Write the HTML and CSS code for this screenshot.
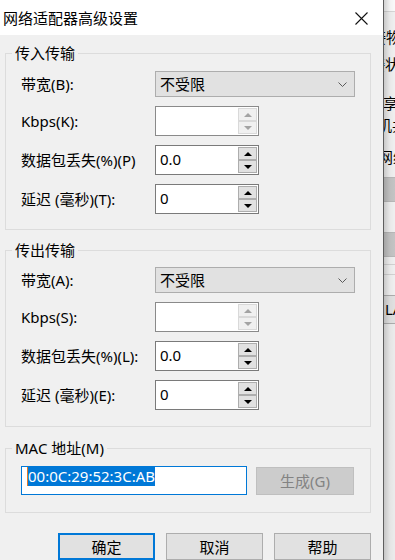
FILE: index.html
```html
<!DOCTYPE html>
<html lang="zh-CN">
<head>
<meta charset="utf-8">
<title>网络适配器高级设置</title>
<link rel="stylesheet" href="styles.css">
</head>
<body>
<div class="screen">
  <div class="dialog">
    <div class="titlebar">
      <span class="title">网络适配器高级设置</span>
      <svg class="close" width="13" height="13" viewBox="0 0 13 13"><path d="M0.5 0.5 L12.5 12.5 M12.5 0.5 L0.5 12.5" stroke="#111" stroke-width="1.1" fill="none"/></svg>
    </div>
    <div class="content">
      <fieldset class="group g-in">
        <legend>传入传输</legend>
        <div class="row">
          <span class="label">带宽(B):</span>
          <div class="combo"><span>不受限</span><svg class="chev" width="9" height="5" viewBox="0 0 9 5"><path d="M0.5 0.5 L4.5 4.5 L8.5 0.5" stroke="#5a5a5a" stroke-width="1" fill="none"/></svg></div>
        </div>
        <div class="row">
          <span class="label">Kbps(K):</span>
          <div class="spin disabled"><span class="val"></span><div class="btns"><span class="sb"><i class="up"></i></span><span class="sb"><i class="down"></i></span></div></div>
        </div>
        <div class="row">
          <span class="label">数据包丢失(%)(P)</span>
          <div class="spin"><span class="val">0.0</span><div class="btns"><span class="sb"><i class="up"></i></span><span class="sb"><i class="down"></i></span></div></div>
        </div>
        <div class="row">
          <span class="label">延迟 (毫秒)(T):</span>
          <div class="spin"><span class="val">0</span><div class="btns"><span class="sb"><i class="up"></i></span><span class="sb"><i class="down"></i></span></div></div>
        </div>
      </fieldset>

      <fieldset class="group g-out">
        <legend>传出传输</legend>
        <div class="row">
          <span class="label">带宽(A):</span>
          <div class="combo"><span>不受限</span><svg class="chev" width="9" height="5" viewBox="0 0 9 5"><path d="M0.5 0.5 L4.5 4.5 L8.5 0.5" stroke="#5a5a5a" stroke-width="1" fill="none"/></svg></div>
        </div>
        <div class="row">
          <span class="label">Kbps(S):</span>
          <div class="spin disabled"><span class="val"></span><div class="btns"><span class="sb"><i class="up"></i></span><span class="sb"><i class="down"></i></span></div></div>
        </div>
        <div class="row">
          <span class="label">数据包丢失(%)(L):</span>
          <div class="spin"><span class="val">0.0</span><div class="btns"><span class="sb"><i class="up"></i></span><span class="sb"><i class="down"></i></span></div></div>
        </div>
        <div class="row">
          <span class="label">延迟 (毫秒)(E):</span>
          <div class="spin"><span class="val">0</span><div class="btns"><span class="sb"><i class="up"></i></span><span class="sb"><i class="down"></i></span></div></div>
        </div>
      </fieldset>

      <fieldset class="group g-mac">
        <legend>MAC 地址(M)</legend>
        <div class="mac-row">
          <div class="mac-input"><span class="sel">00:0C:29:52:3C:AB</span></div>
          <div class="gen-btn">生成(G)</div>
        </div>
      </fieldset>

      <div class="actions">
        <div class="btn default">确定</div>
        <div class="btn">取消</div>
        <div class="btn">帮助</div>
      </div>
    </div>
  </div>

  <div class="behind">
    <div class="b-top"></div>
    <div class="b-line r1"><span class="off1">接物理网络</span></div>
    <div class="b-line r2"><span class="off2">连接状态</span></div>
    <div class="b-line r3"><span class="off3">共享主机</span></div>
    <div class="b-line r4"><span class="off4">主机共享</span></div>
    <div class="b-line r5"><span class="off5">网络</span></div>
    <div class="b-combo c1"></div>
    <div class="b-combo c2"></div>
    <div class="b-sep s1"></div>
    <div class="b-sep s2"></div>
    <div class="b-btn"><span>LAN 区段(S)...</span></div>
    <div class="b-rest"></div>
  </div>
</div>
</body>
</html>
```

FILE: styles.css
```css
* { box-sizing: border-box; }

html, body {
  margin: 0;
  padding: 0;
}

body {
  font-family: "Noto Sans", "Noto Sans CJK SC", sans-serif;
  font-size: 15px;
  color: #000;
  background: #f0f0f0;
}

.screen {
  display: flex;
  width: 395px;
  height: 560px;
  overflow: hidden;
}

.dialog {
  width: 384px;
  flex: none;
  background: #f0f0f0;
  border-right: 1px solid #5e5e5e;
  display: flex;
  flex-direction: column;
}

.titlebar {
  height: 36px;
  background: #fff;
  display: flex;
  align-items: center;
  justify-content: space-between;
  padding: 0 15px 0 3px;
}

.title {
  font-size: 15px;
  line-height: 20px;
  color: #000;
}

.close { display: block; margin-top: 1px; }

.content {
  padding: 0 12px 0 5px;
}

.group {
  margin: 0;
  border: 1px solid #dcdcdc;
  padding: 8px 0 15px 15px;
  min-width: 0;
  display: flex;
  flex-direction: column;
  gap: 9px;
}

.group legend {
  padding: 0 3px;
  margin-left: -9px;
  line-height: 20px;
  font-size: 15px;
}

.g-in { margin-top: 8px; }
.g-out { margin-top: 10px; padding-top: 7px; padding-bottom: 16px; }
.g-mac { margin-top: 11px; padding-top: 8px; padding-bottom: 17px; padding-left: 15px; }

.row {
  display: flex;
  align-items: center;
}

.label {
  width: 134px;
  flex: none;
  line-height: 20px;
  white-space: nowrap;
}

.combo {
  width: 200px;
  height: 26px;
  background: #e1e1e1;
  border: 1px solid #adadad;
  display: flex;
  align-items: center;
  justify-content: space-between;
  padding: 0 7px 0 4px;
  line-height: 20px;
}

.chev { display: block; }

.spin {
  width: 104px;
  height: 30px;
  background: #fff;
  border: 1px solid #7a7a7a;
  display: flex;
  padding: 1px;
}

.spin .val {
  flex: 1;
  padding: 2px 0 0 3px;
  line-height: 20px;
}

.btns {
  width: 19px;
  display: flex;
  flex-direction: column;
}

.sb {
  height: 13px;
  background: #e1e1e1;
  border: 1px solid #adadad;
  display: flex;
  align-items: center;
  justify-content: center;
}

.up {
  display: block;
  width: 0;
  height: 0;
  border-left: 4px solid transparent;
  border-right: 4px solid transparent;
  border-bottom: 4px solid #000;
}

.down {
  display: block;
  width: 0;
  height: 0;
  border-left: 4px solid transparent;
  border-right: 4px solid transparent;
  border-top: 4px solid #000;
}

.spin.disabled { border-color: #8a8a8a; }
.spin.disabled .sb { background: #f0f0f0; border-color: #d9d9d9; }
.spin.disabled .up { border-bottom-color: #a3a3a3; }
.spin.disabled .down { border-top-color: #a3a3a3; }

.mac-row {
  display: flex;
  gap: 9px;
  align-items: center;
}

.mac-input {
  width: 226px;
  height: 29px;
  background: #fff;
  border: 1px solid #0078d7;
  padding: 0 0 0 5px;
  display: flex;
  align-items: flex-start;
}

.sel {
  background: #0078d7;
  color: #fff;
  line-height: 19px;
  border-left: 1px solid #e07b2a;
  margin-left: 0;
}

.gen-btn {
  width: 98px;
  height: 28px;
  background: #cccccc;
  border: 1px solid #bfbfbf;
  color: #838383;
  display: flex;
  align-items: center;
  justify-content: center;
  line-height: 20px;
}

.actions {
  margin-top: 20px;
  display: flex;
  justify-content: flex-end;
  gap: 11px;
  padding-right: 0;
}

.btn {
  width: 97px;
  height: 27px;
  background: #e1e1e1;
  border: 1px solid #adadad;
  display: flex;
  align-items: center;
  justify-content: center;
  line-height: 20px;
}

.btn.default {
  border: 2px solid #0078d7;
}

/* window behind the dialog */
.behind {
  flex: 1;
  position: relative;
  display: flex;
  flex-direction: column;
  background: #f0f0f0;
  overflow: hidden;
}

.behind::after {
  content: "";
  position: absolute;
  inset: 0;
  background: linear-gradient(to right, rgba(0,0,0,0.16), rgba(0,0,0,0.03) 6px, rgba(0,0,0,0) 11px);
  pointer-events: none;
}

.b-top {
  height: 12px;
  flex: none;
  background: #fafafa;
  border-bottom: 1px solid #d6d6d6;
}

.b-line {
  height: 20px;
  flex: none;
  line-height: 20px;
  white-space: nowrap;
  font-family: "Noto Sans CJK SC", sans-serif;
}

.r1 { margin-top: 15px; }
.r2 { margin-top: 7px; }
.r3 { margin-top: 19px; }
.r4 { margin-top: 2px; }
.r5 { margin-top: 12px; }

.off1 { margin-left: -13px; }
.off2 { margin-left: -29px; }
.off3 { margin-left: -16px; }
.off4 { margin-left: -22px; }
.off5 { margin-left: -6px; }

.b-combo {
  height: 25px;
  flex: none;
  background: #c4c4c4;
  border-top: 1px solid #b8b8b8;
  border-bottom: 1px solid #b8b8b8;
}

.c1 { margin-top: 10px; }
.c2 { margin-top: 30px; }

.b-sep {
  height: 1px;
  flex: none;
  background: #d2d2d2;
}

.s1 { margin-top: 7px; }
.s2 { margin-top: 9px; }

.b-btn {
  margin-top: 20px;
  height: 29px;
  flex: none;
  background: #e1e1e1;
  border-top: 1px solid #adadad;
  border-bottom: 1px solid #adadad;
  white-space: nowrap;
  line-height: 27px;
  padding-left: 1px;
}

.b-rest {
  flex: 1;
  background: #ececec;
}
```
